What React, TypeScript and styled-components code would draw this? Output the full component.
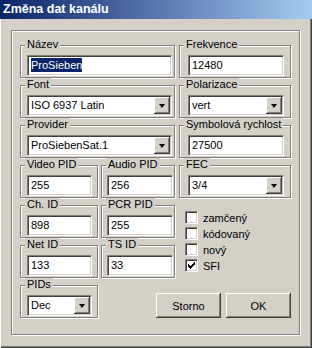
import React from "react";
import styled, { createGlobalStyle } from "styled-components";

const GlobalStyle = createGlobalStyle`
  html, body {
    margin: 0;
    padding: 0;
    background: #d4d0c8;
  }
  body {
    font-family: "Liberation Sans", Arial, sans-serif;
    font-size: 11px;
    color: #000;
  }
`;

const Window = styled.div`
  width: 312px;
  height: 348px;
  box-sizing: border-box;
  display: flex;
  flex-direction: column;
  background: #d4d0c8;
  box-shadow: inset 1px 0 #fff, inset -1px -1px #404040, inset -2px -2px #808080;
`;

const TitleBar = styled.div`
  height: 19px;
  flex-shrink: 0;
  padding-left: 3px;
  background: linear-gradient(to right, #0a246a, #a6caf0);
  color: #fff;
  font-weight: bold;
  font-size: 12.5px;
  line-height: 19px;
  white-space: nowrap;
`;

const Body = styled.div`
  flex: 1;
  padding: 11px 12px 13px 11px;
  display: flex;
`;

const Panel = styled.div`
  flex: 1;
  box-sizing: border-box;
  border: 1px solid #808080;
  box-shadow: inset 1px 1px #fff, 1px 1px #fff;
  padding: 14px 8px 0 8px;
  display: flex;
  flex-direction: column;
`;

const Upper = styled.div`
  display: flex;
  gap: 4px;
`;

const Column = styled.div<{ $width: number }>`
  width: ${({ $width }) => $width}px;
  display: flex;
  flex-direction: column;
  gap: 7px;
`;

const Pair = styled.div`
  display: flex;
  gap: 3px;
`;

const Group = styled.div<{ $width?: number; $pad?: number }>`
  position: relative;
  box-sizing: border-box;
  height: 33px;
  width: ${({ $width }) => ($width ? `${$width}px` : "auto")};
  border: 1px solid #808080;
  box-shadow: inset 1px 1px #fff, 1px 1px #fff;
  padding: 9px 0 0 ${({ $pad }) => $pad ?? 6}px;
`;

const GroupLabel = styled.span`
  position: absolute;
  top: -8px;
  left: 4px;
  padding: 0 2px;
  background: #d4d0c8;
  line-height: 13px;
  white-space: nowrap;
`;

const Sunken = styled.div<{ $width: number; $height?: number }>`
  position: relative;
  box-sizing: border-box;
  width: ${({ $width }) => $width}px;
  height: ${({ $height }) => $height ?? 21}px;
  background: #fff;
  border: 1px solid;
  border-color: #808080 #fff #fff #808080;
  box-shadow: inset 1px 1px #404040, inset -1px -1px #d4d0c8;
  padding: 1px 0 0 3px;
  line-height: 17px;
  white-space: nowrap;
  overflow: hidden;
`;

const Selected = styled.span`
  background: #0a246a;
  color: #fff;
  padding: 1px 0;
`;

const DropButton = styled.div`
  position: absolute;
  top: 1px;
  right: 1px;
  bottom: 1px;
  width: 16px;
  box-sizing: border-box;
  background: #d4d0c8;
  box-shadow: inset -1px -1px #404040, inset 1px 1px #fff, inset -2px -2px #808080;
  display: flex;
  align-items: center;
  justify-content: center;

  &::after {
    content: "";
    width: 0;
    height: 0;
    margin-top: 1px;
    border-left: 3.5px solid transparent;
    border-right: 3.5px solid transparent;
    border-top: 4px solid #000;
  }
`;

const CheckList = styled.div`
  margin-top: 6px;
  padding-left: 6px;
  display: flex;
  flex-direction: column;
  gap: 3px;
`;

const CheckRow = styled.div`
  display: flex;
  align-items: center;
  gap: 5px;
  height: 13px;
`;

const CheckBox = styled.div`
  position: relative;
  box-sizing: border-box;
  width: 13px;
  height: 13px;
  background: #fff;
  border: 1px solid;
  border-color: #808080 #fff #fff #808080;
  box-shadow: inset 1px 1px #404040, inset -1px -1px #d4d0c8;
`;

const Tick = styled.svg`
  position: absolute;
  left: 2px;
  top: 2px;
`;

const Bottom = styled.div`
  margin-top: 7px;
  display: flex;
  align-items: flex-end;
  justify-content: space-between;
`;

const Buttons = styled.div`
  display: flex;
  gap: 5px;
`;

const Button = styled.div`
  box-sizing: border-box;
  width: 65px;
  height: 25px;
  display: flex;
  align-items: center;
  justify-content: center;
  background: #d4d0c8;
  box-shadow: inset -1px -1px #404040, inset 1px 1px #fff, inset -2px -2px #808080;
`;

function Edit({ label, value, width, groupWidth, pad }: {
  label: string;
  value: React.ReactNode;
  width: number;
  groupWidth?: number;
  pad?: number;
}) {
  return (
    <Group $width={groupWidth} $pad={pad}>
      <GroupLabel>{label}</GroupLabel>
      <Sunken $width={width}>{value}</Sunken>
    </Group>
  );
}

function Combo({ label, value, width, groupWidth, pad }: {
  label: string;
  value: string;
  width: number;
  groupWidth?: number;
  pad?: number;
}) {
  return (
    <Group $width={groupWidth} $pad={pad}>
      <GroupLabel>{label}</GroupLabel>
      <Sunken $width={width}>
        {value}
        <DropButton />
      </Sunken>
    </Group>
  );
}

function Check({ label, checked = false }: { label: string; checked?: boolean }) {
  return (
    <CheckRow>
      <CheckBox>
        {checked && (
          <Tick width="7" height="7" viewBox="0 0 7 7">
            <path d="M0 2h1v1h1v1h1V3h1V2h1V1h1V0h1v3H6v1H5v1H4v1H3v1H2V6H1V5H0z" fill="#000" />
          </Tick>
        )}
      </CheckBox>
      {label}
    </CheckRow>
  );
}

export default function App() {
  return (
    <>
      <GlobalStyle />
      <Window>
        <TitleBar>Změna dat kanálu</TitleBar>
        <Body>
          <Panel>
            <Upper>
              <Column $width={155}>
                <Edit label="Název" value={<Selected>ProSieben</Selected>} width={145} />
                <Combo label="Font" value="ISO 6937 Latin" width={145} />
                <Combo label="Provider" value="ProSiebenSat.1" width={145} />
                <Pair>
                  <Edit label="Video PID" value="255" width={65} groupWidth={78} />
                  <Edit label="Audio PID" value="256" width={66} groupWidth={74} pad={5} />
                </Pair>
                <Pair>
                  <Edit label="Ch. ID" value="898" width={65} groupWidth={78} />
                  <Edit label="PCR PID" value="255" width={66} groupWidth={74} pad={5} />
                </Pair>
                <Pair>
                  <Edit label="Net ID" value="133" width={65} groupWidth={78} />
                  <Edit label="TS ID" value="33" width={66} groupWidth={74} pad={5} />
                </Pair>
              </Column>
              <Column $width={112}>
                <Edit label="Frekvence" value="12480" width={96} pad={8} />
                <Combo label="Polarizace" value="vert" width={96} pad={8} />
                <Edit label="Symbolová rychlost" value="27500" width={96} pad={8} />
                <Combo label="FEC" value="3/4" width={96} pad={8} />
                <CheckList>
                  <Check label="zamčený" />
                  <Check label="kódovaný" />
                  <Check label="nový" />
                  <Check label="SFI" checked />
                </CheckList>
              </Column>
            </Upper>
            <Bottom>
              <Combo label="PIDs" value="Dec" width={65} groupWidth={78} />
              <Buttons>
                <Button>Storno</Button>
                <Button>OK</Button>
              </Buttons>
            </Bottom>
          </Panel>
        </Body>
      </Window>
    </>
  );
}
